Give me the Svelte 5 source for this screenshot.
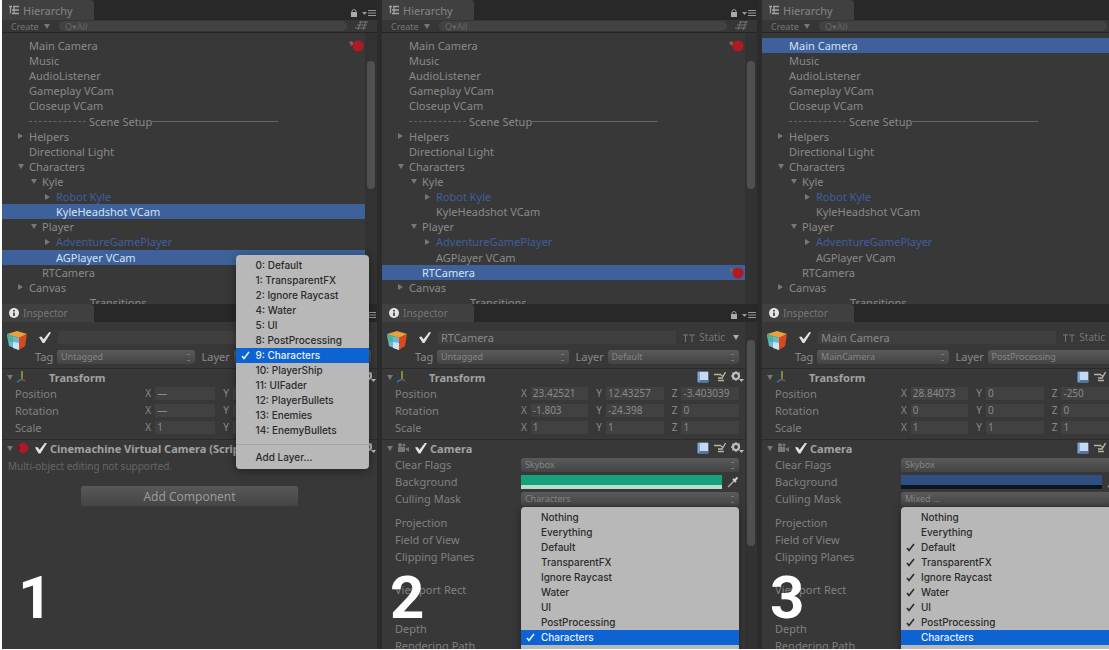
<script>
  const tree = [
    { name: 'Main Camera', depth: 0, cam: true },
    { name: 'Music', depth: 0 },
    { name: 'AudioListener', depth: 0 },
    { name: 'Gameplay VCam', depth: 0 },
    { name: 'Closeup VCam', depth: 0 },
    { name: 'Scene Setup', depth: 0, rule: true },
    { name: 'Helpers', depth: 0, fold: 'closed' },
    { name: 'Directional Light', depth: 0 },
    { name: 'Characters', depth: 0, fold: 'open' },
    { name: 'Kyle', depth: 1, fold: 'open' },
    { name: 'Robot Kyle', depth: 2, fold: 'closed', prefab: true },
    { name: 'KyleHeadshot VCam', depth: 2 },
    { name: 'Player', depth: 1, fold: 'open' },
    { name: 'AdventureGamePlayer', depth: 2, fold: 'closed', prefab: true },
    { name: 'AGPlayer VCam', depth: 2 },
    { name: 'RTCamera', depth: 1 },
    { name: 'Canvas', depth: 0, fold: 'closed' },
    { name: 'Transitions', depth: 0, offset: true }
  ];

  const layers = ['0: Default', '1: TransparentFX', '2: Ignore Raycast', '4: Water', '5: UI', '8: PostProcessing',
    '9: Characters', '10: PlayerShip', '11: UIFader', '12: PlayerBullets', '13: Enemies', '14: EnemyBullets'];
  const masks = ['Nothing', 'Everything', 'Default', 'TransparentFX', 'Ignore Raycast', 'Water', 'UI', 'PostProcessing', 'Characters'];

  const panels = [
    {
      n: 1, selected: ['KyleHeadshot VCam', 'AGPlayer VCam'], dots: ['Main Camera'], name: '', tag: 'Untagged', layer: '',
      vectors: [['Position', '—', '—', '—'], ['Rotation', '—', '—', '—'], ['Scale', '1', '1', '1']]
    },
    {
      n: 2, selected: ['RTCamera'], dots: ['Main Camera', 'RTCamera'], name: 'RTCamera', tag: 'Untagged', layer: 'Default',
      vectors: [['Position', '23.42521', '12.43257', '-3.403039'], ['Rotation', '-1.803', '-24.398', '0'], ['Scale', '1', '1', '1']],
      camera: { flags: 'Skybox', color: '#17a07c', alpha: '#b9dccf', mask: 'Characters', checked: ['Characters'] }
    },
    {
      n: 3, selected: ['Main Camera'], dots: [], name: 'Main Camera', tag: 'MainCamera', layer: 'PostProcessing',
      vectors: [['Position', '28.84073', '0', '-250'], ['Rotation', '0', '0', '0'], ['Scale', '1', '1', '1']],
      camera: {
        flags: 'Skybox', color: '#2f4f82', alpha: '#0c1420', mask: 'Mixed ...',
        checked: ['Default', 'TransparentFX', 'Ignore Raycast', 'Water', 'UI', 'PostProcessing']
      }
    }
  ];
</script>

{#snippet corner()}
  <span class="corner">
    <svg width="8" height="8" viewBox="0 0 8 8"><path d="M2 4V2.500a2 2 0 0 1 4 0V4" fill="none" stroke="#999" /><rect x="1" y="3" width="6" height="5" fill="#aaa" /></svg>
    <svg width="14" height="8" viewBox="0 0 14 8"><path d="M0 3h5L2.500 6z" fill="#999" /><path d="M6 1.500h8M6 4h8M6 6.500h8" stroke="#999" /></svg>
  </span>
{/snippet}

{#snippet tools()}
  <span class="tools">
    <svg width="12" height="12" viewBox="0 0 12 12"><rect x="0.500" y="0.500" width="11" height="11" rx="1" fill="#7fa6d6" /><path d="M3 1h8v8H3z" fill="#c6d9ee" /><path d="M3 9h8v2H2z" fill="#4d77ad" /></svg>
    <svg width="12" height="12" viewBox="0 0 12 12"><path d="M0 3.500h7M4 9.500h6" stroke="#b5b5a0" stroke-width="1.500" /><path d="M7 4l2 1.500L11.500 1M4 7h5" fill="none" stroke="#b9b9ae" stroke-width="1.300" /></svg>
    <svg width="13" height="12" viewBox="0 0 13 12"><circle cx="5" cy="5" r="3" fill="none" stroke="#bdbdbd" stroke-width="2.200" /><path d="M5 0v2M5 8v2M0 5h2M1.500 1.500l1.500 1.500M8.500 1.500L7 3M1.500 8.500L3 7" stroke="#bdbdbd" stroke-width="1.300" /><path d="M8 8h5l-2.500 3z" fill="#bdbdbd" /></svg>
  </span>
{/snippet}

{#snippet tick()}
  <svg class="tick" width="9" height="9" viewBox="0 0 9 9"><path d="M1 5l2 2.500L8 1" fill="none" stroke="currentColor" stroke-width="1.600" /></svg>
{/snippet}

<main>
  <div class="strip">
    {#each panels as p}
      <section class="panel">
        <div class="tabs">
          <button class="tab">
            <svg width="10" height="10" viewBox="0 0 10 10"><path d="M0 1.500h3M4 1.500h6M1.500 1.500v7M3 5h7M3 8.500h7M5 1v8" stroke="#a2a2a2" stroke-width="1.300" fill="none" /></svg>
            Hierarchy
          </button>
          {@render corner()}
        </div>
        <div class="toolbar">
          <button class="create">Create <i class="tri open"></i></button>
          <input class="search" type="text" value="Q▾All" aria-label="Search objects" />
          <svg width="14" height="10" viewBox="0 0 14 10"><path d="M4 1h9M2 4h10M0 7h11M3 9L6 0M8 9l3-9" stroke="#737373" fill="none" /></svg>
        </div>
        <div class="hierarchy">
          <ul class="tree">
            {#each tree as item}
              <li>
                <button class="node d{item.depth}" class:selected={p.selected.includes(item.name)} class:prefab={item.prefab}>
                  <span class="fold">{#if item.fold}<i class="tri {item.fold}"></i>{/if}</span>
                  {#if item.rule}<span class="dashes short"></span>{/if}
                  {#if item.offset}<span class="pad"></span>{/if}
                  {item.name}
                  {#if item.rule}<span class="dashes"></span>{/if}
                  {#if p.dots.includes(item.name)}
                    <svg class="dot" width="16" height="13" viewBox="0 0 16 13"><path d="M0 3l3-1 2 3-3 2z" fill="#8c5a55" /><circle cx="9" cy="7" r="5.500" fill="#b01a22" /></svg>
                  {/if}
                </button>
              </li>
            {/each}
          </ul>
          <div class="track"><div class="thumb"></div></div>
        </div>
        <div class="tabs lower">
          <button class="tab">
            <svg width="10" height="10" viewBox="0 0 10 10"><circle cx="5" cy="5" r="5" fill="#e3e3e3" /><path d="M5 4.500V8M5 2v1.500" stroke="#333" stroke-width="1.600" /></svg>
            Inspector
          </button>
          {@render corner()}
        </div>
        <div class="inspector">
          <div class="props">
            <div class="object">
              <svg class="cube" width="20" height="19" viewBox="0 0 20 19">
                <path d="M0 3L10 0l10 3-8 4z" fill="#e9a13c" /><path d="M0 3l12 4v12L2 15z" fill="#69b6d8" />
                <path d="M0 3l6 2v6l-5-1z" fill="#4bb394" /><path d="M6 11l6 1v7l-6-2z" fill="#c5e5f0" /><path d="M12 7l8-4-2 12-6 4z" fill="#d8491f" />
              </svg>
              <div class="lines">
                <div class="name">
                  <input type="checkbox" checked aria-label="Active" />
                  <input class="title" type="text" value={p.name} aria-label="Name" />
                  {#if p.camera}
                    <button class="static"><svg width="12" height="8" viewBox="0 0 12 8"><path d="M0 1h5M6 1h6M2.500 1v7M9 1v7" stroke="#777" /></svg> Static <i class="tri open"></i></button>
                  {/if}
                </div>
                <div class="tags">
                  <label for="tag{p.n}">Tag</label>
                  <div class="pick tagpick"><select id="tag{p.n}"><option>{p.tag}</option></select></div>
                  <label for="layer{p.n}">Layer</label>
                  <div class="pick">
                    <select id="layer{p.n}"><option>{p.layer}</option></select>
                    {#if p.n === 1}
                      <div class="menu layers" role="menu">
                        {#each layers as l}
                          <button role="menuitem" class:on={l === '9: Characters'}><span class="mark">{#if l === '9: Characters'}{@render tick()}{/if}</span>{l}</button>
                        {/each}
                        <hr />
                        <button role="menuitem"><span class="mark"></span>Add Layer...</button>
                      </div>
                    {/if}
                  </div>
                </div>
              </div>
            </div>

            <header>
              <i class="tri open"></i>
              <svg width="16" height="14" viewBox="0 0 16 14"><path d="M6 1v8" stroke="#8fae3c" stroke-width="1.500" /><path d="M6 9l-5 3" stroke="#3a6fb0" stroke-width="1.500" /><path d="M6 9l3 2" stroke="#b8442f" stroke-width="1.500" /></svg>
              <h2>Transform</h2>
              {@render tools()}
            </header>
            {#each p.vectors as v}
              <div class="row">
                <span class="label">{v[0]}</span>
                <div class="value vec">
                  {#each ['X', 'Y', 'Z'] as axis, i}
                    {#if p.camera || axis !== 'Z'}
                      <label>{axis}<input type="text" value={p.camera || axis === 'X' ? v[i + 1] : ''} /></label>
                    {:else}
                      <span class="blank"></span>
                    {/if}
                  {/each}
                </div>
              </div>
            {/each}

            {#if p.camera}
              <header class="second">
                <i class="tri open"></i>
                <svg width="16" height="12" viewBox="0 0 16 12"><rect x="2" y="5" width="7" height="5" fill="#777" /><circle cx="4" cy="3" r="2" fill="#777" /><circle cx="8" cy="3" r="1.500" fill="#777" /><path d="M9 7l4-2v5z" fill="#777" /></svg>
                <input type="checkbox" checked aria-label="Camera enabled" />
                <h2>Camera</h2>
                {@render tools()}
              </header>
              <div class="row">
                <label class="label" for="flags{p.n}">Clear Flags</label>
                <div class="value pick"><select id="flags{p.n}"><option>{p.camera.flags}</option></select></div>
              </div>
              <div class="row">
                <span class="label">Background</span>
                <div class="value color">
                  <button class="swatch" aria-label="Background" style="background:{p.camera.color};border-color:{p.camera.alpha}"></button>
                  <svg width="12" height="12" viewBox="0 0 12 12"><path d="M1 11l6-6" stroke="#aaa" stroke-width="1.500" /><path d="M6 3l3 3M7.500 4.500L10.500 1.500" stroke="#d0d0d0" stroke-width="2" /></svg>
                </div>
              </div>
              <div class="row">
                <label class="label" for="mask{p.n}">Culling Mask</label>
                <div class="value pick">
                  <select id="mask{p.n}"><option>{p.camera.mask}</option></select>
                  <div class="menu masks" role="menu">
                    {#each masks as m}
                      <button role="menuitem" class:on={m === 'Characters'}><span class="mark">{#if p.camera.checked.includes(m)}{@render tick()}{/if}</span>{m}</button>
                    {/each}
                  </div>
                </div>
              </div>
              <div class="row gap"><span class="label">Projection</span></div>
              <div class="row"><span class="label">Field of View</span></div>
              <div class="row"><span class="label">Clipping Planes</span></div>
              <div class="row wide"><span class="label">Viewport Rect</span></div>
              <div class="row wider"><span class="label">Depth</span></div>
              <div class="row"><span class="label">Rendering Path</span></div>
            {:else}
              <header class="second">
                <i class="tri open"></i>
                <svg width="16" height="14" viewBox="0 0 16 14"><circle cx="7" cy="7" r="5" fill="#b3172a" /><path d="M1 4l4 3-3 3z" fill="#7c1420" /></svg>
                <input type="checkbox" checked aria-label="Virtual camera enabled" />
                <h2>Cinemachine Virtual Camera (Script)</h2>
                {@render tools()}
              </header>
              <p class="note">Multi-object editing not supported.</p>
              <button class="add">Add Component</button>
            {/if}
          </div>
          {#if p.camera}<div class="track"><div class="thumb tall"></div></div>{/if}
        </div>
        <strong class="step">{p.n}</strong>
      </section>
    {/each}
  </div>
</main>

<style>
  :global(body) { margin: 0; background: #fff; }
  * { box-sizing: border-box; }
  main { height: calc(100vh - 1px); overflow: hidden; background: #383838; color: #8a8a8a; font: 11px/15px "Noto Sans", sans-serif; }
  button, input, select { font: inherit; color: inherit; border: 0; background: none; padding: 0; margin: 0; border-radius: 0; min-width: 0; }
  svg { flex: none; }
  .strip { display: grid; grid-template-columns: repeat(3, 1fr); width: 102.8%; height: 100%; }
  .panel { position: relative; min-width: 0; display: flex; flex-direction: column; border-left: 2px solid #2b2b2b; border-right: 3px solid #2b2b2b; }
  .panel:first-child { border-left-color: #fff; }

  .tabs { display: flex; justify-content: space-between; align-items: flex-end; height: 20px; flex: none; background: #282828; }
  .tabs.lower { height: 18px; }
  .tab { display: flex; align-items: center; gap: 4px; width: 92px; height: 100%; padding-left: 7px; background: #404040; color: #858585; border-radius: 0 3px 0 0; }
  .lower .tab { font-size: 10px; color: #777; }
  .corner { display: flex; gap: 4px; padding: 0 1px 3px 0; }
  .toolbar { display: flex; align-items: center; height: 13px; flex: none; padding: 0 8px 0 9px; gap: 8px; background: #363636; border-bottom: 1px solid #252525; font-size: 9px; line-height: 11px; color: #777; }
  .create { display: flex; align-items: center; gap: 5px; width: 40px; }
  .search { flex: 1; height: 10px; padding-left: 6px; background: #424242; border-radius: 5px; color: #666; }

  .hierarchy { display: flex; flex: none; height: 271px; overflow: hidden; }
  .tree { flex: 1; display: grid; grid-auto-rows: 1fr; height: 272px; margin: 5px 0 0; padding: 0; list-style: none; }
  .node { display: flex; align-items: center; width: 100%; height: 100%; position: relative; text-align: left; white-space: nowrap; }
  .d0 { padding-left: 14px; }
  .d1 { padding-left: 27px; }
  .d2 { padding-left: 41px; }
  .fold { width: 13px; display: flex; padding-left: 2px; }
  .prefab { color: #3d5f9f; }
  .selected { background: #3e619b; color: #d5e2f5; }
  .dashes { width: 126px; border-top: 1px solid #666; }
  .dashes.short { width: 57px; margin-right: 3px; border-top-style: dashed; }
  .pad { width: 61px; }
  .dot { position: absolute; right: 0; }
  .tri { width: 0; height: 0; flex: none; border: 3px solid transparent; }
  .tri.open { border-top: 5px solid #777; border-bottom: 0; }
  .tri.closed { border-left: 5px solid #777; border-right: 0; }
  .track { width: 12px; flex: none; background: #323232; padding: 28px 2px 0; }
  .thumb { height: 128px; background: #505050; border-radius: 4px; }
  .inspector .track { padding-top: 18px; }
  .thumb.tall { height: 206px; }

  .inspector { display: flex; flex: 1; min-height: 0; }
  .props { flex: 1; min-width: 0; padding-top: 6px; }
  .object { display: flex; padding: 0 6px 2px 5px; gap: 8px; }
  .cube { margin-top: 3px; }
  .lines { flex: 1; min-width: 0; }
  .name, .tags { display: flex; align-items: center; height: 19px; }
  .name { gap: 7px; padding-left: 4px; }
  .title { flex: 1; height: 13px; padding-left: 3px; background: #3f3f3f; }
  .static { display: flex; align-items: center; gap: 4px; font-size: 10px; color: #777; }
  .static .tri { margin-left: 4px; border-top-color: #aaa; }
  .tags label { width: 22px; }
  .tags label ~ label { width: 32px; margin-left: 7px; }
  .pick { position: relative; flex: 1; }
  .pick::before { content: ""; position: absolute; right: 5px; top: 4px; width: 3px; height: 5px; border: solid #777; border-width: 1px 0; pointer-events: none; }
  select { display: block; appearance: none; width: 100%; height: 14px; padding: 0 4px; background: linear-gradient(#5a5a5a, #444); border-radius: 3px; font-size: 9px; line-height: 13px; color: #858585; }
  input[type="checkbox"] { appearance: none; flex: none; width: 12px; height: 11px; background: #e2e2e2; clip-path: polygon(0 45%, 20% 40%, 38% 65%, 85% 0, 100% 5%, 45% 100%, 30% 100%); }

  header { display: flex; align-items: center; height: 17px; padding: 0 1px 0 5px; gap: 3px; border-top: 1px solid #2b2b2b; }
  header.second { margin-top: 3px; }
  header > svg + h2 { margin-left: 14px; }
  h2 { margin: 0; font-size: 11px; line-height: 15px; font-weight: 700; color: #a2a2a2; white-space: nowrap; }
  .tools { display: flex; gap: 5px; margin-left: auto; }
  .row { display: flex; align-items: center; height: 17px; padding: 0 6px 0 13px; }
  .row.gap { margin-top: 7px; }
  .row.wide { margin-top: 16px; }
  .row.wider { margin-top: 22px; }
  .label { flex: 0 0 36.6%; color: #818181; white-space: nowrap; }
  .value { flex: 1; min-width: 0; }
  .vec { display: flex; gap: 8px; }
  .vec label { display: flex; align-items: center; flex: 1; min-width: 0; gap: 4px; font-size: 10px; }
  .blank { flex: 1; }
  .vec input { flex: 1; width: 0; height: 13px; padding-left: 2px; background: #414141; overflow: hidden; }
  .color { display: flex; align-items: center; gap: 5px; }
  .swatch { flex: 1; height: 14px; border-bottom: 4px solid; }
  .note { margin: 3px 0 0 6px; font-size: 10px; line-height: 15px; color: #666; }
  .add { display: block; width: 58%; height: 20px; margin: 12px auto 0; background: linear-gradient(#585858, #454545); border-radius: 3px; font-size: 12px; color: #9a9a9a; }

  .menu { position: absolute; z-index: 2; left: 0; right: 0; padding: 3px 0 4px; background: #b8b8b8; border-radius: 4px; box-shadow: 0 2px 8px #0006; font: 500 10px/15px Inter, sans-serif; color: #2b2b2b; }
  .menu button { display: flex; align-items: center; width: 100%; height: 15px; white-space: nowrap; }
  .menu .on { background: #0d63d2; color: #e6f0ff; }
  .mark { width: 20px; padding-left: 5px; display: flex; }
  .menu hr { margin: 6px 0 5px; border: 0; border-top: 1px solid #a4a4a4; }
  .layers { top: -95px; left: 2px; right: 2px; }
  .masks { top: 15px; padding-bottom: 10px; }
  .step { position: absolute; left: 8px; bottom: 21px; z-index: 3; font: 700 60px/70px Roboto, sans-serif; color: #fff; }
  .panel:first-child .step { left: 16px; }
</style>
